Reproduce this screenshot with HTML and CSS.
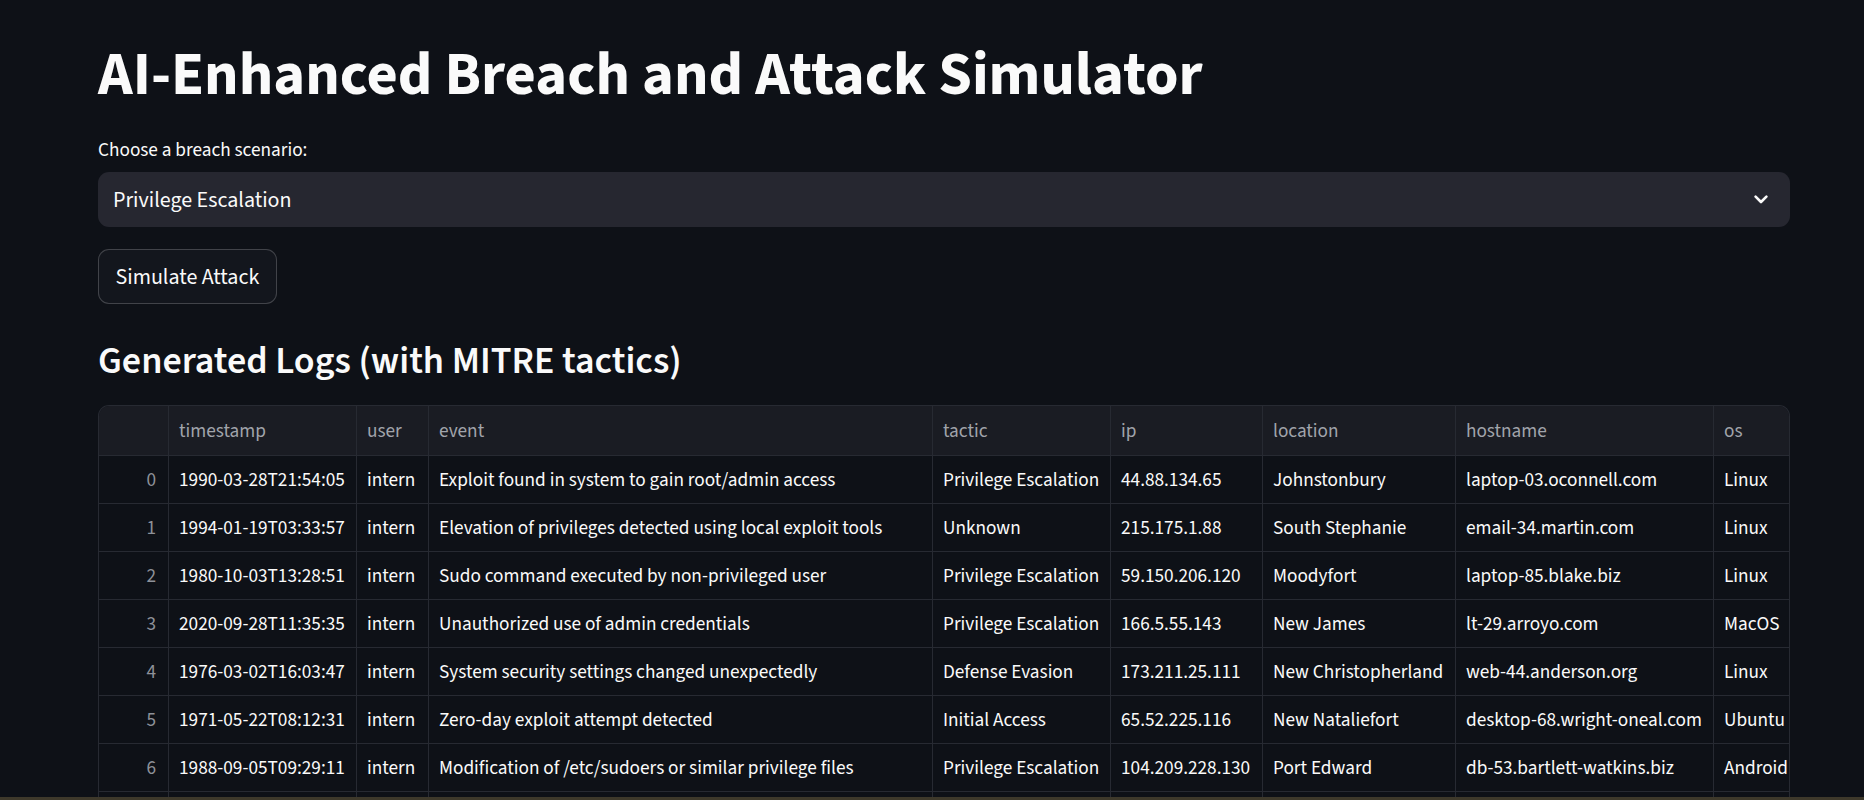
FILE: index.html
```html
<!DOCTYPE html>
<html lang="en">
<head>
<meta charset="utf-8">
<title>AI-Enhanced Breach and Attack Simulator</title>
<link rel="stylesheet" href="styles.css">
</head>
<body>
<main class="main">
  <h1 class="title">AI-Enhanced Breach and Attack Simulator</h1>
  <label class="label">Choose a breach scenario:</label>
  <div class="select">
    <span class="select-value">Privilege Escalation</span>
    <svg class="chevron" width="14" height="9" viewBox="0 0 14 9"><path d="M1.6 1.6 L7 7 L12.4 1.6" fill="none" stroke="#fafafa" stroke-width="2.6" stroke-linecap="round" stroke-linejoin="round"/></svg>
  </div>
  <button class="btn">Simulate Attack</button>
  <h3 class="subtitle">Generated Logs (with MITRE tactics)</h3>
  <div class="grid">
    <div class="row head">
      <div class="c c-idx"></div>
      <div class="c c-ts">timestamp</div>
      <div class="c c-user">user</div>
      <div class="c c-ev">event</div>
      <div class="c c-tac">tactic</div>
      <div class="c c-ip">ip</div>
      <div class="c c-loc">location</div>
      <div class="c c-host">hostname</div>
      <div class="c c-os">os</div>
    </div>
    <div class="row">
      <div class="c c-idx">0</div><div class="c c-ts">1990-03-28T21:54:05</div><div class="c c-user">intern</div><div class="c c-ev">Exploit found in system to gain root/admin access</div><div class="c c-tac">Privilege Escalation</div><div class="c c-ip">44.88.134.65</div><div class="c c-loc">Johnstonbury</div><div class="c c-host">laptop-03.oconnell.com</div><div class="c c-os">Linux</div>
    </div>
    <div class="row">
      <div class="c c-idx">1</div><div class="c c-ts">1994-01-19T03:33:57</div><div class="c c-user">intern</div><div class="c c-ev">Elevation of privileges detected using local exploit tools</div><div class="c c-tac">Unknown</div><div class="c c-ip">215.175.1.88</div><div class="c c-loc">South Stephanie</div><div class="c c-host">email-34.martin.com</div><div class="c c-os">Linux</div>
    </div>
    <div class="row">
      <div class="c c-idx">2</div><div class="c c-ts">1980-10-03T13:28:51</div><div class="c c-user">intern</div><div class="c c-ev">Sudo command executed by non-privileged user</div><div class="c c-tac">Privilege Escalation</div><div class="c c-ip">59.150.206.120</div><div class="c c-loc">Moodyfort</div><div class="c c-host">laptop-85.blake.biz</div><div class="c c-os">Linux</div>
    </div>
    <div class="row">
      <div class="c c-idx">3</div><div class="c c-ts">2020-09-28T11:35:35</div><div class="c c-user">intern</div><div class="c c-ev">Unauthorized use of admin credentials</div><div class="c c-tac">Privilege Escalation</div><div class="c c-ip">166.5.55.143</div><div class="c c-loc">New James</div><div class="c c-host">lt-29.arroyo.com</div><div class="c c-os">MacOS</div>
    </div>
    <div class="row">
      <div class="c c-idx">4</div><div class="c c-ts">1976-03-02T16:03:47</div><div class="c c-user">intern</div><div class="c c-ev">System security settings changed unexpectedly</div><div class="c c-tac">Defense Evasion</div><div class="c c-ip">173.211.25.111</div><div class="c c-loc">New Christopherland</div><div class="c c-host">web-44.anderson.org</div><div class="c c-os">Linux</div>
    </div>
    <div class="row">
      <div class="c c-idx">5</div><div class="c c-ts">1971-05-22T08:12:31</div><div class="c c-user">intern</div><div class="c c-ev">Zero-day exploit attempt detected</div><div class="c c-tac">Initial Access</div><div class="c c-ip">65.52.225.116</div><div class="c c-loc">New Nataliefort</div><div class="c c-host">desktop-68.wright-oneal.com</div><div class="c c-os">Ubuntu</div>
    </div>
    <div class="row">
      <div class="c c-idx">6</div><div class="c c-ts">1988-09-05T09:29:11</div><div class="c c-user">intern</div><div class="c c-ev">Modification of /etc/sudoers or similar privilege files</div><div class="c c-tac">Privilege Escalation</div><div class="c c-ip">104.209.228.130</div><div class="c c-loc">Port Edward</div><div class="c c-host">db-53.bartlett-watkins.biz</div><div class="c c-os">Android</div>
    </div>
    <div class="row row-partial">
      <div class="c c-idx"></div><div class="c c-ts"></div><div class="c c-user"></div><div class="c c-ev"></div><div class="c c-tac"></div><div class="c c-ip"></div><div class="c c-loc"></div><div class="c c-host"></div><div class="c c-os"></div>
    </div>
  </div>
</main>
<div class="window-edge"></div>
</body>
</html>
```
FILE: styles.css
```css
html, body {
  margin: 0;
  height: 100%;
  overflow: hidden;
  background: #0e1117;
}
body {
  font-family: "Source Sans Pro", "Source Sans 3", Lato, sans-serif;
  color: #fafafa;
}
.main {
  display: flex;
  flex-direction: column;
  align-items: flex-start;
  width: 1692px;
  padding-left: 98px;
}
.title {
  margin: 0;
  padding-top: 35px;
  font-size: 60.5px;
  line-height: 80px;
  font-weight: 700;
}
.label {
  margin-top: 21px;
  font-size: 19.25px;
  line-height: 28px;
}
.select {
  margin-top: 8px;
  width: 100%;
  height: 55px;
  box-sizing: border-box;
  background: #262730;
  border-radius: 11px;
  display: flex;
  align-items: center;
  justify-content: space-between;
  padding: 0 22px 0 15px;
}
.select-value {
  font-size: 22px;
}
.chevron { display: block; }
.btn {
  margin-top: 22px;
  height: 55px;
  padding: 0 16.5px;
  box-sizing: border-box;
  background: #13161d;
  border: 1px solid rgba(250, 250, 250, 0.2);
  border-radius: 11px;
  color: #fafafa;
  font-family: inherit;
  font-size: 22px;
}
.subtitle {
  margin: 33px 0 0;
  font-size: 38px;
  line-height: 48px;
  font-weight: 600;
}
.grid {
  margin-top: 20px;
  width: 100%;
  box-sizing: border-box;
  border: 1px solid #272a32;
  border-bottom: none;
  border-radius: 11px 11px 0 0;
  overflow: hidden;
  font-size: 19.25px;
}
.row {
  display: flex;
  height: 48px;
  box-sizing: border-box;
  border-bottom: 1px solid #272a32;
  background: #0e1117;
}
.row.head {
  height: 49.5px;
  background: #1a1c23;
  color: #a1a4ab;
}
.row-partial {
  height: 8px;
  border-bottom: none;
}
.c {
  flex: none;
  box-sizing: border-box;
  display: flex;
  align-items: center;
  padding: 1px 11px 0 10px;
  border-right: 1px solid #272a32;
  white-space: nowrap;
  overflow: hidden;
}
.c-idx { width: 70px; justify-content: flex-end; color: #8e9199; padding-right: 12px; }
.c-ts { width: 188px; }
.c-user { width: 72px; }
.c-ev { width: 504px; }
.c-tac { width: 178px; }
.c-ip { width: 152px; }
.c-loc { width: 193px; }
.c-host { width: 258px; }
.c-os { width: 120px; border-right: none; }
.window-edge {
  position: fixed;
  left: 0;
  right: 0;
  bottom: 0;
  height: 3px;
  background: #3e392b;
}
```
